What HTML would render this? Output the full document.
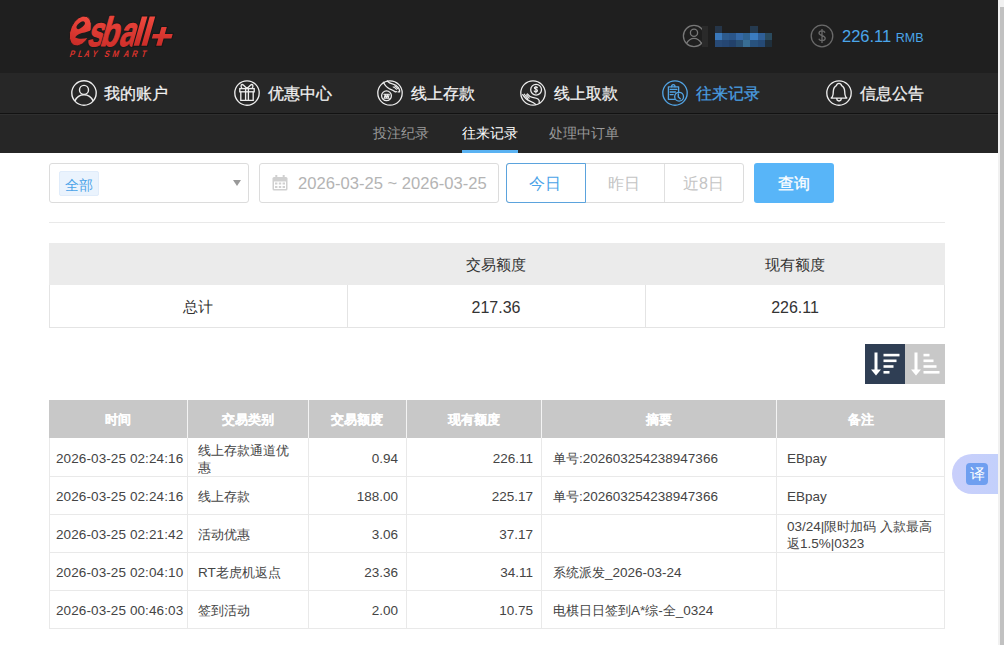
<!DOCTYPE html>
<html><head><meta charset="utf-8">
<style>
*{box-sizing:border-box;margin:0;padding:0}
html,body{width:1004px;height:645px;overflow:hidden;background:#fff;font-family:"Liberation Sans",sans-serif;color:#333}
.abs{position:absolute}
#hdr{position:absolute;left:0;top:0;width:998px;height:73px;background:#1f1f1f}
#nav{position:absolute;left:0;top:73px;width:998px;height:40px;background:#272727}
#navline{position:absolute;left:0;top:113px;width:998px;height:1px;background:#121212}
#sub{position:absolute;left:0;top:114px;width:998px;height:39px;background:#262626}
.nv{position:absolute;top:85px;font-size:16px;line-height:18px;color:#f2f2f2;white-space:nowrap;-webkit-text-stroke:0.25px currentColor}
.ic{position:absolute;top:80px;width:26px;height:26px}
.sn{position:absolute;top:125px;font-size:14px;line-height:16px;color:#9a9a9a;white-space:nowrap}
.st{font-size:15px;line-height:18px;text-align:center;color:#333;white-space:nowrap}
.th{font-size:13px;line-height:16px;text-align:center;color:#fff;font-weight:bold;white-space:nowrap;-webkit-text-stroke:0.15px #fff}
.td{font-size:13.5px;line-height:17px;color:#444;white-space:nowrap}
.c{font-size:13px}
#scroll{position:absolute;left:998px;top:0;width:6px;height:645px;background:#f1f1f1}
#thumb{position:absolute;left:1000px;top:7px;width:4px;height:638px;background:#c1c1c1}
</style></head><body>
<div id="hdr"></div>
<div id="nav"></div>
<div id="navline"></div>
<div id="sub"></div>
<div class="abs" style="left:0;top:114px;width:998px;height:1px;background:#2f2f2f"></div>

<!-- logo -->
<svg class="abs" style="left:0;top:0" width="200" height="70" viewBox="0 0 200 70">
<defs><linearGradient id="lg" gradientUnits="userSpaceOnUse" x1="0" y1="15" x2="0" y2="47"><stop offset="0" stop-color="#f24a3f"/><stop offset="1" stop-color="#c82b27"/></linearGradient><linearGradient id="lb" x1="0" y1="0" x2="0" y2="1"><stop offset="0" stop-color="#f24a3f"/><stop offset="1" stop-color="#c82b27"/></linearGradient></defs>
<g font-family="Liberation Sans" font-weight="bold">
<ellipse transform="translate(80.4,31) rotate(24)" rx="9.9" ry="15.8" fill="url(#lb)" stroke="#181818" stroke-width="0.8"/>
<ellipse transform="translate(80.7,25.2) rotate(-40)" rx="5" ry="2.5" fill="#1c1c1c"/>
<path d="M75.2 37.6c1.6-3 6-4.6 9.6-5l8-2.8.6 7.8-5.8.5c-3.6.6-8.4 1.4-12.4-.5z" fill="#1c1c1c"/>
<g transform="translate(86,45.5) skewX(-16) scale(0.72,1)"><text font-size="42" fill="#181818" stroke="#181818" stroke-width="3.2" stroke-linejoin="round">s</text><text font-size="42" fill="url(#lb)" stroke="url(#lb)" stroke-width="1.1" stroke-linejoin="round">s</text></g>
<g transform="translate(99,45.5) skewX(-16) scale(0.74,1)"><text font-size="41" fill="#181818" stroke="#181818" stroke-width="3.2" stroke-linejoin="round">b</text><text font-size="41" fill="url(#lb)" stroke="url(#lb)" stroke-width="1.1" stroke-linejoin="round">b</text></g>
<g transform="translate(118,45.5) skewX(-16) scale(0.7,1)"><text font-size="42" fill="#181818" stroke="#181818" stroke-width="3.2" stroke-linejoin="round">a</text><text font-size="42" fill="url(#lb)" stroke="url(#lb)" stroke-width="1.1" stroke-linejoin="round">a</text></g>
<path d="M133.6 45.8h5.5l8.3-29.4h-5.5zM141.4 45.8h5.5l8.3-29.4h-5.5zM156.2 45.8h5.3l5.3-18.8h-5.3zM151.8 38.4h19.6l1.3-4.5h-19.6z" fill="#181818" stroke="#181818" stroke-width="2.2"/>
<path d="M133.6 45.8h5.5l8.3-29.4h-5.5zM141.4 45.8h5.5l8.3-29.4h-5.5zM156.2 45.8h5.3l5.3-18.8h-5.3zM151.8 38.4h19.6l1.3-4.5h-19.6z" fill="url(#lg)"/>
</g>
<g transform="translate(69,56.6) skewX(-17) scale(0.8,1)"><text x="0 10.4 18 28 43.6 53.4 67.4 77.8 89.6" y="0" font-family="Liberation Sans" font-weight="bold" font-size="9.4" fill="#d9332c">PLAYSMART</text></g>
</svg>

<!-- user -->
<svg class="abs" style="left:680px;top:22px" width="28" height="28" viewBox="0 0 28 28" fill="none" stroke="#787878" stroke-width="1.3">
<circle cx="14" cy="14" r="10.6"/>
<circle cx="14" cy="10.8" r="3.6"/>
<path d="M6.4 21.6c1.8-3.2 4.5-5.2 7.6-5.2s5.8 2 7.6 5.2"/>
</svg>
<div class="abs" style="left:702px;top:26px;width:6px;height:21px;background:#2a2a2a"></div>
<div class="abs" style="left:715px;top:26px;width:57px;height:21px;display:grid;grid-template-columns:repeat(8,7.1px);grid-template-rows:7px 7px 7px;filter:blur(0.7px)">
<i style="background:#253548"></i><i></i><i></i><i></i><i></i><i style="background:#253a4f"></i><i></i><i></i>
<i style="background:#3a78ba"></i><i style="background:#2d5a8c"></i><i style="background:#2a5589"></i><i style="background:#3468a5"></i><i style="background:#2f6291"></i><i style="background:#3b7cc0"></i><i style="background:#2f5f97"></i><i style="background:#2a4a5e"></i>
<i style="background:#284a76"></i><i style="background:#254672"></i><i style="background:#22416a"></i><i style="background:#294f72"></i><i style="background:#386d93"></i><i style="background:#28527e"></i><i style="background:#254a76"></i><i style="background:#1f2f3c"></i>
</div>

<!-- balance -->
<svg class="abs" style="left:810px;top:24px" width="24" height="24" viewBox="0 0 24 24" fill="none" stroke="#6a6a6a" stroke-width="1.3">
<circle cx="12" cy="12" r="10.8"/>
<path d="M15 8.6c-.6-1.2-1.7-1.8-3-1.8-1.8 0-3 .9-3 2.3 0 3.2 6.2 1.8 6.2 5.2 0 1.5-1.3 2.4-3.2 2.4-1.5 0-2.7-.7-3.2-1.9M12 5v14"/>
</svg>
<div class="abs" style="left:842px;top:26px;font-size:16.5px;line-height:20px;color:#4ba6ea;white-space:nowrap">226.11 <span style="font-size:12.5px">RMB</span></div>

<!-- nav icons -->
<svg class="ic" style="left:71px" viewBox="0 0 26 26" fill="none" stroke="#ececec" stroke-width="1.4">
<circle cx="13" cy="13" r="12.2"/><circle cx="13" cy="9.9" r="4.5"/><path d="M3.9 20.9C5.7 16.9 9 14.7 13 14.7s7.3 2.2 9.1 6.2"/>
</svg>
<div class="nv" style="left:104px">我的账户</div>

<svg class="ic" style="left:234px" viewBox="0 0 26 26" fill="none" stroke="#ececec" stroke-width="1.35">
<circle cx="13" cy="13" r="12.2"/><rect x="5.8" y="8.6" width="14.4" height="3.2"/><path d="M6.8 11.8v8.5h12.4v-8.5M11.6 8.6v11.7M14.4 8.6v11.7M13 8.6L9.6 5.2Q8 3.9 7.2 5.1Q6.7 6.2 7.9 8.6M13 8.6l3.4-3.4q1.6-1.3 2.4-.1q.5 1.1-.7 3.5"/>
</svg>
<div class="nv" style="left:268px">优惠中心</div>

<svg class="ic" style="left:377px" viewBox="0 0 26 26" fill="none" stroke="#ececec" stroke-width="1.3" stroke-linecap="round" stroke-linejoin="round">
<circle cx="13" cy="13" r="12.2"/><circle cx="9.5" cy="15.8" r="4.9"/>
<path d="M6.9 14.2h5.4M6.9 18.2h5.4M7.2 18.1l1-3.7 1 3.7 1-3.7 1 3.7 1-3.7" stroke-width="1.1"/>
<path d="M6.4 2.3C7.9 5.3 9.8 7.7 12.6 8.9c2 .8 4 1.8 5.8 3l1-.3"/>
<path d="M10.3 1C11.6 2.5 13 3.4 15.4 3.9c2.6.5 4.6 1.8 6 3.8.9 1.4 1.4 2.8 1.2 4.2h-1.5"/>
<path d="M16.2 6.9c1.2.4 2.4 1.2 3.2 2.4M17.7 5.9c1.4.6 2.4 1.6 3 2.8" stroke-width="1.1"/>
</svg>
<div class="nv" style="left:411px">线上存款</div>

<svg class="ic" style="left:520px" viewBox="0 0 26 26" fill="none" stroke="#ececec" stroke-width="1.3" stroke-linecap="round" stroke-linejoin="round">
<circle cx="13" cy="13" r="12.2"/><circle cx="16.1" cy="9.7" r="5.4"/>
<path d="M17.4 7.7c-.3-.6-.9-.9-1.5-.9-.8 0-1.5.5-1.5 1.2 0 1.5 3.1 1 3.1 2.6 0 .8-.7 1.3-1.6 1.3-.8 0-1.4-.4-1.7-1M15.9 6.4v6.6" stroke-width="1.15"/>
<path d="M2.7 14.6C4.5 17.6 7 20 10 21.2c2 .8 4 1.6 5.8 3.2"/>
<path d="M7.3 13.9c1.4 1.9 3.1 3.1 5.2 3.5 2 .4 4 .6 5.5 1.6 1.2.8 1.6 2 1.2 3.6"/>
<path d="M4.3 14.2l3.4 4.4M6.6 14.8l2.6 3.4" stroke-width="1.1"/>
</svg>
<div class="nv" style="left:554px">线上取款</div>

<svg class="ic" style="left:662px" viewBox="0 0 26 26" fill="none" stroke="#52a3e3" stroke-width="1.35" stroke-linecap="round" stroke-linejoin="round">
<circle cx="13" cy="13" r="12.2"/>
<path d="M12.6 19.3H6.4V6.8h10.2v5.3"/><path d="M9.6 6.8c0-1.2.8-2.2 1.7-2.2s1.7 1 1.7 2.2"/>
<path d="M8.2 9.4h6.6M8.2 12h5.2M8.2 14.6h3"/>
<circle cx="17.1" cy="16.7" r="4.4"/><path d="M16.3 13.9v3l2 1.8"/>
</svg>
<div class="nv" style="left:696px;color:#4a9ee0">往来记录</div>

<svg class="ic" style="left:826px" viewBox="0 0 26 26" fill="none" stroke="#ececec" stroke-width="1.35" stroke-linejoin="round">
<circle cx="13" cy="13" r="12.2"/>
<path d="M13 3.4c-1.5 0-2.3 1-2.6 2.3-2 1-2.9 3.2-3.1 5.7l-.2 2.8c-.2 1.8-1 3-1.9 3.9h15.6c-.9-.9-1.7-2.1-1.9-3.9l-.2-2.8c-.2-2.5-1.1-4.7-3.1-5.7-.3-1.3-1.1-2.3-2.6-2.3z"/>
<path d="M10.7 18.1c0 1.7 1 2.9 2.3 2.9s2.3-1.2 2.3-2.9"/>
</svg>
<div class="nv" style="left:860px">信息公告</div>

<!-- sub nav -->
<div class="sn" style="left:373px">投注纪录</div>
<div class="sn" style="left:462px;color:#fff">往来记录</div>
<div class="sn" style="left:549px">处理中订单</div>
<div class="abs" style="left:462px;top:150px;width:56px;height:3px;background:#5ab2f2"></div>


<!-- filter row -->
<div class="abs" style="left:49px;top:163px;width:200px;height:40px;border:1px solid #dcdcdc;border-radius:3px"></div>
<div class="abs" style="left:59px;top:171px;width:40px;height:25px;background:#eaf3fd;border:1px solid #e0ecfa;border-radius:2px"></div>
<div class="abs" style="left:65px;top:176px;font-size:14px;line-height:18px;color:#4aa3e8">全部</div>
<svg class="abs" style="left:233px;top:180px" width="8" height="6" viewBox="0 0 8 6"><path d="M0 0h8L4 6z" fill="#999"/></svg>

<div class="abs" style="left:259px;top:163px;width:240px;height:40px;border:1px solid #dcdcdc;border-radius:3px"></div>
<svg class="abs" style="left:272px;top:175px" width="17" height="16" viewBox="0 0 17 16"><rect x="0.5" y="2" width="15" height="13.5" rx="1.5" fill="#d0d0d0"/><rect x="2" y="6.5" width="12" height="7.5" fill="#fff"/><rect x="3.3" y="0" width="2" height="4" fill="#d0d0d0"/><rect x="10.7" y="0" width="2" height="4" fill="#d0d0d0"/><g fill="#d0d0d0"><rect x="3" y="7.5" width="2.4" height="2"/><rect x="6.8" y="7.5" width="2.4" height="2"/><rect x="10.6" y="7.5" width="2.4" height="2"/><rect x="3" y="11" width="2.4" height="2"/><rect x="6.8" y="11" width="2.4" height="2"/><rect x="10.6" y="11" width="2.4" height="2"/></g></svg>
<div class="abs" style="left:298px;top:174px;font-size:16.6px;line-height:19px;color:#b4b4b4;white-space:nowrap">2026-03-25 ~ 2026-03-25</div>

<div class="abs" style="left:506px;top:163px;width:238px;height:40px;border:1px solid #dcdcdc;border-radius:3px"></div>
<div class="abs" style="left:664px;top:164px;width:1px;height:38px;background:#e0e0e0"></div>
<div class="abs" style="left:506px;top:163px;width:80px;height:40px;border:1px solid #5ba3dd;border-radius:3px 0 0 3px"></div>
<div class="abs" style="left:529px;top:174px;font-size:16px;line-height:19px;color:#4aa3e8">今日</div>
<div class="abs" style="left:608px;top:174px;font-size:16px;line-height:19px;color:#c4c4c4">昨日</div>
<div class="abs" style="left:683px;top:174px;font-size:16px;line-height:19px;color:#c4c4c4;white-space:nowrap">近8日</div>

<div class="abs" style="left:754px;top:163px;width:80px;height:40px;background:#58b5f8;border-radius:3px"></div>
<div class="abs" style="left:778px;top:174px;font-size:16px;line-height:19px;color:#fff;-webkit-text-stroke:0.3px #fff">查询</div>

<div class="abs" style="left:49px;top:222px;width:896px;height:1px;background:#e9e9e9"></div>

<!-- summary table -->
<div class="abs" style="left:49px;top:243px;width:896px;height:42px;background:#ebebeb"></div>
<div class="abs" style="left:49px;top:285px;width:896px;height:43px;border:1px solid #e4e4e4;border-top:none"></div>
<div class="abs" style="left:347px;top:285px;width:1px;height:42px;background:#e4e4e4"></div>
<div class="abs" style="left:645px;top:285px;width:1px;height:42px;background:#e4e4e4"></div>
<div class="abs st" style="left:347px;top:256px;width:298px">交易额度</div>
<div class="abs st" style="left:645px;top:256px;width:300px">现有额度</div>
<div class="abs st" style="left:49px;top:298px;width:298px">总计</div>
<div class="abs st" style="left:347px;top:299px;width:298px;font-size:16px">217.36</div>
<div class="abs st" style="left:645px;top:299px;width:300px;font-size:16px">226.11</div>

<!-- sort buttons -->
<div class="abs" style="left:865px;top:344px;width:40px;height:40px;background:#2f3e54"></div>
<div class="abs" style="left:905px;top:344px;width:40px;height:40px;background:#c8c8c8"></div>
<svg class="abs" style="left:865px;top:344px" width="80" height="40" viewBox="0 0 80 40" fill="#fff">
<rect x="9.5" y="8.5" width="3" height="18"/><path d="M6 25.5h10l-5 6z"/>
<rect x="18.5" y="9.8" width="16" height="2.6"/><rect x="18.5" y="15.5" width="13" height="2.6"/><rect x="18.5" y="21.2" width="10" height="2.6"/><rect x="18.5" y="27" width="6" height="2.6"/>
<rect x="49.5" y="8.5" width="3" height="18"/><path d="M46 25.5h10l-5 6z"/>
<rect x="58.5" y="9.8" width="6" height="2.6"/><rect x="58.5" y="15.5" width="10" height="2.6"/><rect x="58.5" y="21.2" width="13" height="2.6"/><rect x="58.5" y="27" width="16" height="2.6"/>
</svg>
<!-- detail table -->
<div class="abs" style="left:49px;top:400px;width:896px;height:38px;background:#c8c8c8"></div>
<div class="abs" style="left:187px;top:400px;width:1px;height:38px;background:#f4f4f4"></div>
<div class="abs" style="left:308px;top:400px;width:1px;height:38px;background:#f4f4f4"></div>
<div class="abs" style="left:406px;top:400px;width:1px;height:38px;background:#f4f4f4"></div>
<div class="abs" style="left:541px;top:400px;width:1px;height:38px;background:#f4f4f4"></div>
<div class="abs" style="left:776px;top:400px;width:1px;height:38px;background:#f4f4f4"></div>
<div class="abs th" style="left:49px;top:412px;width:138px">时间</div>
<div class="abs th" style="left:187px;top:412px;width:121px">交易类别</div>
<div class="abs th" style="left:308px;top:412px;width:98px">交易额度</div>
<div class="abs th" style="left:406px;top:412px;width:135px">现有额度</div>
<div class="abs th" style="left:541px;top:412px;width:235px">摘要</div>
<div class="abs th" style="left:776px;top:412px;width:169px">备注</div>
<div class="abs" style="left:49px;top:438px;width:1px;height:191px;background:#e9e9e9"></div>
<div class="abs" style="left:187px;top:438px;width:1px;height:191px;background:#e9e9e9"></div>
<div class="abs" style="left:308px;top:438px;width:1px;height:191px;background:#e9e9e9"></div>
<div class="abs" style="left:406px;top:438px;width:1px;height:191px;background:#e9e9e9"></div>
<div class="abs" style="left:541px;top:438px;width:1px;height:191px;background:#e9e9e9"></div>
<div class="abs" style="left:776px;top:438px;width:1px;height:191px;background:#e9e9e9"></div>
<div class="abs" style="left:944px;top:438px;width:1px;height:191px;background:#e9e9e9"></div>
<div class="abs" style="left:49px;top:476px;width:896px;height:1px;background:#e9e9e9"></div>
<div class="abs" style="left:49px;top:514px;width:896px;height:1px;background:#e9e9e9"></div>
<div class="abs" style="left:49px;top:552px;width:896px;height:1px;background:#e9e9e9"></div>
<div class="abs" style="left:49px;top:590px;width:896px;height:1px;background:#e9e9e9"></div>
<div class="abs" style="left:49px;top:628px;width:896px;height:1px;background:#e9e9e9"></div>
<div class="abs td" style="left:56px;top:450px;letter-spacing:.1px">2026-03-25 02:24:16</div>
<div class="abs td" style="left:198px;top:442px"><span class="c">线上存款通道优</span><br><span class="c">惠</span></div>
<div class="abs td" style="left:308px;top:450px;width:90px;text-align:right">0.94</div>
<div class="abs td" style="left:406px;top:450px;width:127px;text-align:right">226.11</div>
<div class="abs td" style="left:553px;top:450px"><span class="c">单号</span>:202603254238947366</div>
<div class="abs td" style="left:787px;top:450px">EBpay</div>
<div class="abs td" style="left:56px;top:488px;letter-spacing:.1px">2026-03-25 02:24:16</div>
<div class="abs td" style="left:198px;top:488px"><span class="c">线上存款</span></div>
<div class="abs td" style="left:308px;top:488px;width:90px;text-align:right">188.00</div>
<div class="abs td" style="left:406px;top:488px;width:127px;text-align:right">225.17</div>
<div class="abs td" style="left:553px;top:488px"><span class="c">单号</span>:202603254238947366</div>
<div class="abs td" style="left:787px;top:488px">EBpay</div>
<div class="abs td" style="left:56px;top:526px;letter-spacing:.1px">2026-03-25 02:21:42</div>
<div class="abs td" style="left:198px;top:526px"><span class="c">活动优惠</span></div>
<div class="abs td" style="left:308px;top:526px;width:90px;text-align:right">3.06</div>
<div class="abs td" style="left:406px;top:526px;width:127px;text-align:right">37.17</div>
<div class="abs td" style="left:787px;top:518px">03/24|<span class="c">限时加码</span> <span class="c">入款最高</span><br><span class="c">返</span>1.5%|0323</div>
<div class="abs td" style="left:56px;top:564px;letter-spacing:.1px">2026-03-25 02:04:10</div>
<div class="abs td" style="left:198px;top:564px">RT<span class="c">老虎机返点</span></div>
<div class="abs td" style="left:308px;top:564px;width:90px;text-align:right">23.36</div>
<div class="abs td" style="left:406px;top:564px;width:127px;text-align:right">34.11</div>
<div class="abs td" style="left:553px;top:564px"><span class="c">系统派发</span>_2026-03-24</div>
<div class="abs td" style="left:56px;top:602px;letter-spacing:.1px">2026-03-25 00:46:03</div>
<div class="abs td" style="left:198px;top:602px"><span class="c">签到活动</span></div>
<div class="abs td" style="left:308px;top:602px;width:90px;text-align:right">2.00</div>
<div class="abs td" style="left:406px;top:602px;width:127px;text-align:right">10.75</div>
<div class="abs td" style="left:553px;top:602px"><span class="c">电棋日日签到</span>A*<span class="c">综</span>-<span class="c">全</span>_0324</div>
<!-- translate widget -->
<div class="abs" style="left:952px;top:454px;width:46px;height:40px;border-radius:20px 0 0 20px;background:linear-gradient(90deg,#c9cffb,#c3d0fb)"></div>
<div class="abs" style="left:966px;top:463px;width:22px;height:22px;border-radius:4px;background:#6f9ff0;color:#fff;font-size:15px;line-height:22px;text-align:center">译</div>

<div id="scroll"></div><div id="thumb"></div>
</body></html>
